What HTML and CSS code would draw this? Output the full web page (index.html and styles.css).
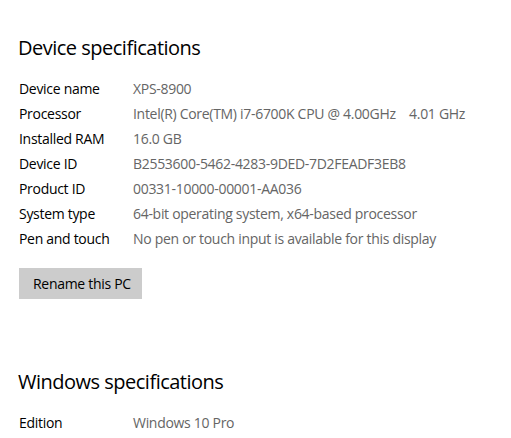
FILE: index.html
```html
<!DOCTYPE html>
<html lang="en">
<head>
<meta charset="utf-8">
<title>About</title>
<link rel="stylesheet" href="styles.css">
</head>
<body>
<main class="page">
  <section class="section">
    <h2 class="heading">Device specifications</h2>
    <dl class="specs">
      <div class="row"><dt>Device name</dt><dd>XPS-8900</dd></div>
      <div class="row"><dt>Processor</dt><dd>Intel(R) Core(TM) i7-6700K CPU @ 4.00GHz&nbsp;&nbsp;&nbsp;&nbsp;4.01 GHz</dd></div>
      <div class="row"><dt>Installed RAM</dt><dd>16.0 GB</dd></div>
      <div class="row"><dt>Device ID</dt><dd>B2553600-5462-4283-9DED-7D2FEADF3EB8</dd></div>
      <div class="row"><dt>Product ID</dt><dd>00331-10000-00001-AA036</dd></div>
      <div class="row"><dt>System type</dt><dd>64-bit operating system, x64-based processor</dd></div>
      <div class="row"><dt>Pen and touch</dt><dd>No pen or touch input is available for this display</dd></div>
    </dl>
    <button class="button" type="button">Rename this PC</button>
  </section>
  <section class="section section-windows">
    <h2 class="heading">Windows specifications</h2>
    <dl class="specs">
      <div class="row"><dt>Edition</dt><dd>Windows 10 Pro</dd></div>
    </dl>
  </section>
</main>
</body>
</html>
```

FILE: styles.css
```css
html, body {
  margin: 0;
  padding: 0;
  background: #ffffff;
}

body {
  font-family: "Open Sans", "Noto Sans", "Liberation Sans", sans-serif;
  color: #000000;
  overflow: hidden;
}

.page {
  padding: 34px 0 0 18px;
}

.section {
  display: flex;
  flex-direction: column;
  align-items: flex-start;
}

.section-windows {
  margin-top: 69px;
}

.heading {
  margin: 0 0 14px 0;
  font-size: 20px;
  line-height: 28px;
  font-weight: 400;
  letter-spacing: -0.5px;
  color: #000000;
}

.specs {
  margin: 0;
  display: flex;
  flex-direction: column;
}

.row {
  display: grid;
  grid-template-columns: 115px auto;
  font-size: 14px;
  line-height: 25px;
  letter-spacing: -0.3px;
}

.row dt {
  margin: 0 0 0 1px;
  color: #000000;
}

.row dd {
  margin: 0;
  color: #656565;
  white-space: nowrap;
}

.button {
  margin: 17px 0 0 1px;
  height: 31px;
  padding: 0 11px 0 14px;
  border: none;
  border-radius: 0;
  background: #cccccc;
  font-family: inherit;
  font-size: 14px;
  letter-spacing: -0.3px;
  color: #000000;
}
```
